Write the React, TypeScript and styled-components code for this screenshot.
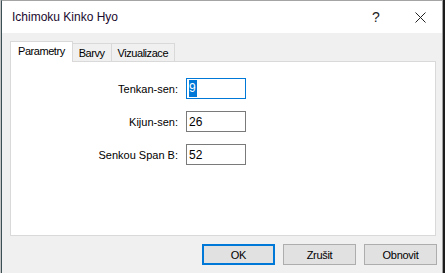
import { Fragment } from 'react';
import styled, { createGlobalStyle } from 'styled-components';

const GlobalStyle = createGlobalStyle`
  html, body {
    margin: 0;
    padding: 0;
    background: #1c1c1c;
  }
  body {
    font-family: "Liberation Sans", Arial, sans-serif;
    font-size: 11px;
    color: #000;
  }
`;

const Screen = styled.div`
  width: 445px;
  height: 273px;
  display: flex;
  background: #1c1c1c;
  border-left: 1px solid #c4c4c4;
  box-sizing: border-box;
  overflow: hidden;
`;

const Window = styled.div`
  width: 442px;
  height: 273px;
  box-sizing: border-box;
  display: flex;
  flex-direction: column;
  background: #f0f0f0;
  border-top: 1px solid #a4a4a4;
  border-left: 1px solid #3b4f57;
  border-right: 1px solid #a0a0a0;
`;

const TitleBar = styled.div`
  height: 32px;
  flex-shrink: 0;
  display: flex;
  align-items: center;
  background: #fff;
  padding-left: 10px;
`;

const Title = styled.div`
  flex: 1;
  font-size: 12px;
  color: #1a0a2e;
  padding-bottom: 1px;
`;

const TitleButton = styled.div`
  width: 44px;
  height: 32px;
  display: flex;
  align-items: center;
  justify-content: center;
  font-size: 14px;
  color: #222;
`;

const Body = styled.div`
  flex: 1;
  display: flex;
  flex-direction: column;
  padding: 8px 6px 0 8px;
`;

const TabStrip = styled.div`
  height: 20px;
  display: flex;
  align-items: flex-end;
  position: relative;
  z-index: 1;
`;

const Tab = styled.div<{ $active?: boolean }>`
  box-sizing: border-box;
  height: ${(p) => (p.$active ? '21px' : '18px')};
  margin-bottom: ${(p) => (p.$active ? '-1px' : '0')};
  margin-left: ${(p) => (p.$active ? '0' : '-1px')};
  padding: 0 ${(p) => (p.$active ? '7px' : '6px')};
  display: flex;
  align-items: center;
  letter-spacing: -0.45px;
  background: ${(p) => (p.$active ? '#fff' : '#f0f0f0')};
  border: 1px solid #d9d9d9;
  border-bottom: none;
  padding-bottom: ${(p) => (p.$active ? '2px' : '0')};

  &:first-child {
    margin-left: 0;
  }
`;

const Panel = styled.div`
  box-sizing: border-box;
  height: 175px;
  background: #fff;
  border: 1px solid #d9d9d9;
  padding-top: 16px;
`;

const Form = styled.div`
  display: grid;
  grid-template-columns: 167px 60px;
  grid-auto-rows: 21px;
  column-gap: 8px;
  row-gap: 12px;
`;

const Label = styled.div`
  text-align: right;
  align-self: center;
  padding-top: 1px;
`;

const Field = styled.div<{ $focused?: boolean }>`
  box-sizing: border-box;
  height: 21px;
  display: flex;
  align-items: center;
  padding-left: 2px;
  font-size: 12px;
  background: #fff;
  border: 1px solid ${(p) => (p.$focused ? '#0078d7' : '#7a7a7a')};
`;

const Selected = styled.span`
  background: #0078d7;
  color: #fff;
  line-height: 17px;
  padding: 0 1px 0 0;
`;

const ButtonRow = styled.div`
  display: flex;
  justify-content: flex-end;
  gap: 8px;
  padding-top: 8px;
  margin-right: -1px;
`;

const Button = styled.div<{ $default?: boolean }>`
  box-sizing: border-box;
  width: 73px;
  height: 21px;
  display: flex;
  align-items: center;
  justify-content: center;
  background: #e1e1e1;
  letter-spacing: -0.3px;
  border: ${(p) => (p.$default ? '2px solid #0078d7' : '1px solid #adadad')};
`;

const params = [
  { label: 'Tenkan-sen:', value: '9', focused: true },
  { label: 'Kijun-sen:', value: '26' },
  { label: 'Senkou Span B:', value: '52' },
];

const App = () => {
  return (
    <>
      <GlobalStyle />
      <Screen>
        <Window>
          <TitleBar>
            <Title>Ichimoku Kinko Hyo</Title>
            <TitleButton>?</TitleButton>
            <TitleButton>
              <svg width="11" height="11" viewBox="0 0 11 11">
                <path d="M0.5 0.5L10.5 10.5M10.5 0.5L0.5 10.5" stroke="#222" strokeWidth="1" fill="none" />
              </svg>
            </TitleButton>
          </TitleBar>
          <Body>
            <TabStrip>
              <Tab $active>Parametry</Tab>
              <Tab>Barvy</Tab>
              <Tab>Vizualizace</Tab>
            </TabStrip>
            <Panel>
              <Form>
                {params.map((p) => (
                  <Fragment key={p.label}>
                    <Label>{p.label}</Label>
                    <Field $focused={p.focused}>
                      {p.focused ? <Selected>{p.value}</Selected> : p.value}
                    </Field>
                  </Fragment>
                ))}
              </Form>
            </Panel>
            <ButtonRow>
              <Button $default>OK</Button>
              <Button>Zrušit</Button>
              <Button>Obnovit</Button>
            </ButtonRow>
          </Body>
        </Window>
      </Screen>
    </>
  );
};

export default App;
